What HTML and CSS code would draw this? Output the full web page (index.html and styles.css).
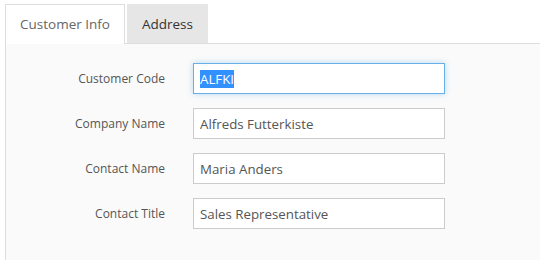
FILE: index.html
```html
<!DOCTYPE html>
<html lang="en">
<head>
    <meta charset="UTF-8">
    <title>Customer</title>
    <link rel="stylesheet" href="styles.css">
</head>
<body>
    <div class="tabs">
        <ul class="tab-list">
            <li class="tab active">Customer Info</li>
            <li class="tab">Address</li>
        </ul>
        <div class="tab-panel">
            <form class="form-grid">
                <label for="code">Customer Code</label>
                <input type="text" id="code" value="ALFKI" class="focused">
                <label for="company">Company Name</label>
                <input type="text" id="company" value="Alfreds Futterkiste">
                <label for="contact">Contact Name</label>
                <input type="text" id="contact" value="Maria Anders">
                <label for="title">Contact Title</label>
                <input type="text" id="title" value="Sales Representative">
            </form>
        </div>
    </div>
    <script>
        const code = document.getElementById('code');
        code.focus();
        code.select();
    </script>
</body>
</html>
```
FILE: styles.css
```css
body {
    margin: 0;
    font-family: 'Open Sans', sans-serif;
    background: #fff;
    overflow: hidden;
}
.tabs {
    padding: 4px 0 0 5px;
}
.tab-list {
    list-style: none;
    margin: 0;
    padding: 0;
    display: flex;
    gap: 2px;
}
.tab {
    height: 39px;
    padding: 0 14px;
    font-size: 13.5px;
    line-height: 39px;
    color: #333;
    background: #e6e6e6;
    box-sizing: border-box;
    border: 1px solid transparent;
    border-bottom: none;
}
.tab.active {
    background: #fff;
    color: #666;
    border-color: #ddd;
    margin-bottom: -1px;
    height: 40px;
    position: relative;
}
.tab-panel {
    height: calc(100vh - 43px);
    background: #fafafa;
    border-top: 1px solid #ddd;
    border-left: 1px solid #ddd;
    padding: 19px 0 0 0;
    box-sizing: border-box;
}
.form-grid {
    display: grid;
    grid-template-columns: 159px 252px;
    column-gap: 28px;
    row-gap: 14px;
    align-items: center;
}
label {
    text-align: right;
    font-size: 12px;
    color: #555;
}
input {
    height: 31px;
    box-sizing: border-box;
    border: 1px solid #ccc;
    background: #fff;
    padding: 0 6px;
    font-family: 'Open Sans', sans-serif;
    font-size: 13.3px;
    color: #555;
    outline: none;
    border-radius: 0;
}
input.focused,
input:focus {
    border-color: #66afe9;
    box-shadow: 0 0 6px rgba(102, 175, 233, 0.45);
}
input::selection {
    background: #3390ff;
    color: #fff;
}
```
